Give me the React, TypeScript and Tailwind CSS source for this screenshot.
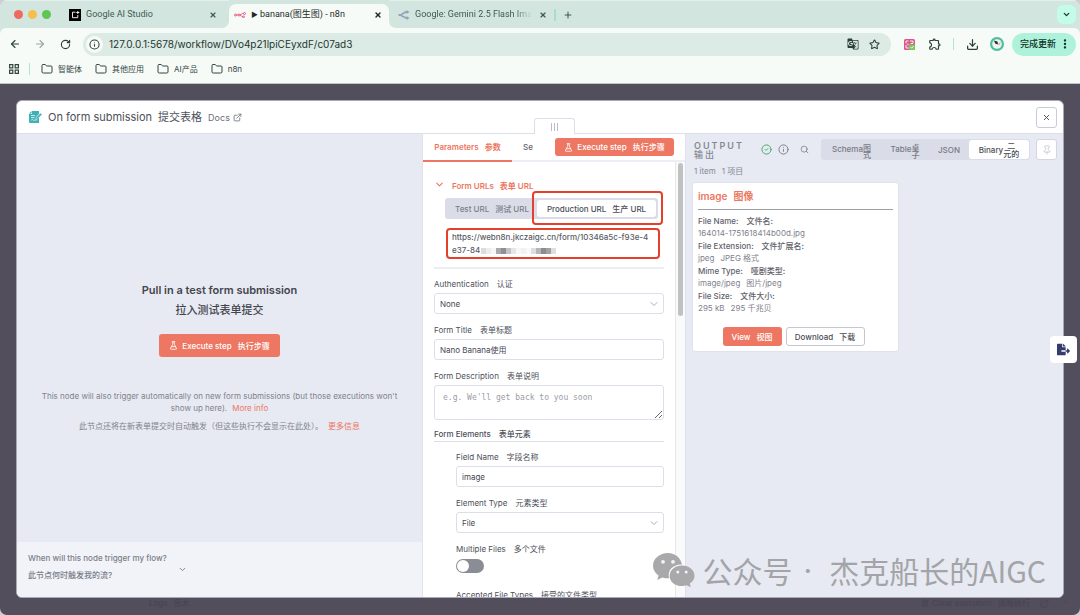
import type { ReactNode } from "react";
import {
  ArrowLeft,
  ArrowRight,
  ChevronDown,
  ChevronUp,
  CircleCheck,
  Download,
  ExternalLink,
  FlaskConical,
  Folder,
  Info,
  Pin,
  Plus,
  RotateCw,
  Search,
  Star,
  Trash2,
  X,
} from "lucide-react";
import { FaFileExport } from "react-icons/fa";
import { MdGTranslate, MdMoreVert, MdOutlineExtension } from "react-icons/md";

function Bi({ en, zh, gap = "ml-[6px]" }: { en: string; zh: string; gap?: string }) {
  return (
    <>
      {en}
      <span className={gap}>{zh}</span>
    </>
  );
}

function N8nMark() {
  return (
    <svg viewBox="0 0 24 12" className="h-[6px] w-3 shrink-0" fill="none" stroke="#ea4b71" strokeWidth="1.8">
      <circle cx="3" cy="6" r="2" />
      <circle cx="10" cy="6" r="2" />
      <circle cx="21" cy="3" r="2" />
      <circle cx="19" cy="9.6" r="1.8" />
      <path d="M5 6h3M12 6c3 0 2-3 5-3h2M12 6c3 0 2 3.600 5 3.600" />
    </svg>
  );
}

function FormMark() {
  return (
    <svg viewBox="0 0 26 24" className="h-3 w-[13px] shrink-0">
      <path d="M6 0h14v6l-5 5v3l3-.5 2-2V24H2a2 2 0 0 1-2-2V6h6z" fill="#3fb0b5" />
      <path d="M0 5 5 0v5z" fill="#3fb0b5" />
      <path d="M23 4l3 3-8.500 8.500-4 1 1-4z" fill="#3fb0b5" stroke="#fff" strokeWidth="0.8" />
      <path d="M4 9h8M4 13h7M4 19c2-3 3-3 4-1s2 1 3 0h5" stroke="#fff" strokeWidth="1.4" fill="none" />
    </svg>
  );
}

function RouterMark() {
  return (
    <svg viewBox="0 0 24 20" className="h-[10px] w-3 shrink-0" fill="none" stroke="#94a3b8" strokeWidth="3.600">
      <path d="M1 10h3c5 0 7-6 13-6h2M4 10c5 0 7 6 13 6h2" />
      <path d="M17 0l6 4-6 4zM17 12l6 4-6 4z" fill="#94a3b8" stroke="none" />
    </svg>
  );
}

function WechatMark() {
  return (
    <svg viewBox="0 0 42 34" className="h-[34px] w-[42px] shrink-0">
      <path
        d="M15 0C6.700 0 0 5.600 0 12.800c0 4 2.200 7.400 5.500 9.800L4.300 27l5-2.600c1.800.6 3.700.9 5.700.9h1.200c-2.300-7.500 3.600-13.900 12.800-13.700C27.800 5 22.200 0 15 0z"
        fill="#a9a9ab"
      />
      <path
        d="M29 12.600c-7 0-12.400 4.600-12.400 10.300S22 33 29 33c1.600 0 3.200-.3 4.600-.7l4.200 1.900-1-3.700c2.900-1.900 4.700-4.600 4.700-7.600 0-5.700-5.500-10.300-12.500-10.300z"
        fill="#a9a9ab"
      />
      <circle cx="10" cy="8.800" r="1.900" fill="#f4f4f6" />
      <circle cx="20" cy="8.800" r="1.900" fill="#f4f4f6" />
      <circle cx="24.800" cy="19" r="1.500" fill="#f4f4f6" />
      <circle cx="33.200" cy="19" r="1.500" fill="#f4f4f6" />
    </svg>
  );
}

function BrowserTabs() {
  return (
    <div className="flex h-7 items-stretch bg-[#f6fbf8] font-[Roboto,'Noto_Sans_CJK_SC',sans-serif] text-[9px] text-[#3f5a52]">
      <div className="flex w-[229px] items-stretch rounded-br-[7px] border-t border-[#e2efea] bg-[#d2e6df]">
        <div className="flex w-[60px] items-center gap-[5px] pl-[14px]">
          <span className="size-[9px] rounded-full bg-[#ed6a5e]" />
          <span className="size-[9px] rounded-full bg-[#f4bf4f]" />
          <span className="size-[9px] rounded-full bg-[#61c554]" />
        </div>
        <div className="flex flex-1 items-center pr-[12px] pl-[9px]">
          <svg viewBox="0 0 12 12" className="size-3">
            <rect width="12" height="12" fill="#000" />
            <path d="M6.500 3.200H3.500v5.500h5.300V6M8.800 2v3M7.300 3.500h3" stroke="#fff" strokeWidth="0.9" fill="none" />
          </svg>
          <span className="ml-[5px] flex-1">Google AI Studio</span>
          <button aria-label="Close Google AI Studio"><X size={8} strokeWidth={3.500} /></button>
        </div>
      </div>
      <div className="w-[160px] bg-[#d2e6df] pt-[4px]">
        <div className="flex h-6 items-center rounded-t-[7px] bg-[#f6fbf8] pr-[7px] pb-[3px] pl-[5px] text-[#1f2b27]">
          <N8nMark />
          <span className="ml-[5px] flex-1 whitespace-nowrap"><span className="mr-[2px] text-[7px]">▶</span>banana(图生图) - n8n</span>
          <button aria-label="Close n8n"><X size={8} strokeWidth={4} /></button>
        </div>
      </div>
      <div className="flex flex-1 items-stretch rounded-bl-[7px] border-t border-[#e2efea] bg-[#d2e6df]">
        <div className="flex w-[167px] items-center pr-[9px] pl-[9px]">
          <RouterMark />
          <span className="ml-[5px] whitespace-nowrap [mask-image:linear-gradient(to_right,black_85%,transparent)]">
            Google: Gemini 2.5 Flash Ima
          </span>
          <button aria-label="Close Gemini" className="ml-auto"><X size={8} strokeWidth={3.500} /></button>
        </div>
        <div className="flex flex-1 items-center">
          <span className="-ml-[2px] h-3 w-[2px] rounded bg-[#a4dfca]" />
          <button aria-label="New tab" className="ml-[7px]"><Plus size={10} strokeWidth={2.500} /></button>
        </div>
        <div className="flex items-center pr-[4px]">
          <button aria-label="Tab list" className="flex size-[19px] items-center justify-center rounded-[6px] bg-[#c3fce9] text-[#17352b]">
            <ChevronDown size={9} strokeWidth={3.500} />
          </button>
        </div>
      </div>
    </div>
  );
}

function AddressBar() {
  return (
    <div className="flex h-8 items-center rounded-t-[6px] bg-[#f6fbf8] pr-[4px] pl-[9px] text-[#2c3f38]">
      <button aria-label="Back"><ArrowLeft size={12} strokeWidth={2.200} /></button>
      <button aria-label="Forward" className="ml-[13px] text-[#98a8a1]"><ArrowRight size={12} strokeWidth={2.200} /></button>
      <button aria-label="Reload" className="ml-[14px]"><RotateCw size={11} strokeWidth={2.500} /></button>
      <div className="ml-[12px] flex h-[23px] flex-1 items-center rounded-full bg-[#dcebe5] pr-[11px] pl-[3px]">
        <span className="flex size-[17px] items-center justify-center rounded-full bg-[#f6fbf8]">
          <Info size={11} strokeWidth={2.300} />
        </span>
        <input
          aria-label="Address"
          className="ml-[6px] min-w-0 flex-1 bg-transparent text-[10px] text-[#24352f] outline-none"
          defaultValue="127.0.0.1:5678/workflow/DVo4p21lpiCEyxdF/c07ad3"
        />
        <MdGTranslate size={12} />
        <Star size={11} strokeWidth={2.300} className="ml-[10px]" />
      </div>
      <svg viewBox="0 0 11 11" className="ml-[13px] size-[11px]">
        <rect width="11" height="11" rx="1.500" fill="#dc5589" />
        <path d="M2 4.500V2h2.500M6 2h3v2.500H6.500M2 6v3h3M4 4.500v2" stroke="#fff" strokeWidth="0.9" fill="none" />
        <rect x="5" y="5.500" width="6" height="5.500" rx="1" fill="#77c95a" />
        <path d="M6.500 8l1.200 1.200L9.600 7" stroke="#fff" strokeWidth="0.9" fill="none" />
      </svg>
      <MdOutlineExtension size={14} className="ml-[13px]" />
      <span className="ml-[11px] h-3 w-px bg-[#a3ead1]" />
      <Download size={13} strokeWidth={2.300} className="ml-[12px]" />
      <svg viewBox="0 0 14 14" className="ml-[11px] size-[14px]">
        <circle cx="7" cy="7" r="7" fill="#4cbfa0" />
        <circle cx="7" cy="7" r="4.800" fill="#eef4f2" />
        <path d="M3.800 3.600l3.600.8 1 3.200-3-.8z" fill="#24352f" />
        <path d="M7.500 6.500l3.500-1.500-1.500 3.500z" fill="#e9b8a0" />
      </svg>
      <button className="ml-[8px] flex h-[23px] w-16 items-center justify-between rounded-full bg-[#aef2dc] pr-[4px] pl-2 text-[9px] font-medium whitespace-nowrap text-[#12352a]">
        完成更新
        <MdMoreVert size={14} />
      </button>
    </div>
  );
}

function Bookmarks() {
  return (
    <div className="flex h-6 items-center border-b border-[#c3c4c8] bg-[#f6fbf8] pb-[5px] pl-[9px] text-[8px] text-[#34443e]">
      <svg viewBox="0 0 10 10" className="size-[10px]" fill="none" stroke="currentColor" strokeWidth="1.200">
        <path d="M.6.6h3.200v3.200H.6zM6.200.6h3.200v3.200H6.200zM.6 6.200h3.200v3.200H.6zM6.200 6.200h3.200v3.200H6.200z" />
      </svg>
      <span className="ml-[10px] h-3 w-px bg-[#a3ead1]" />
      <nav className="ml-[11px] flex gap-[13px]">
        {["智能体", "其他应用", "AI产品", "n8n"].map((name) => (
          <a key={name} href="#" className="flex items-center gap-[5px]">
            <Folder size={12} strokeWidth={2} />
            {name}
          </a>
        ))}
      </nav>
    </div>
  );
}

function ExecuteButton({ className }: { className: string }) {
  return (
    <button className={`flex items-center justify-center gap-[4px] rounded-[3px] bg-[#ed7762] text-[8px] font-medium whitespace-nowrap text-white ${className}`}>
      <FlaskConical size={9} strokeWidth={2.200} />
      <span><Bi en="Execute step" zh="执行步骤" /></span>
    </button>
  );
}

function Field({ id, en, zh, children }: { id: string; en: string; zh: string; children: ReactNode }) {
  return (
    <div className="mt-[10px]">
      <label htmlFor={id} className="mb-[3px] block h-3 text-[8px] leading-3 text-[#4d5059]">
        <Bi en={en} zh={zh} gap="ml-[8px]" />
      </label>
      {children}
    </div>
  );
}

const boxClass = "block w-full rounded-[3px] border border-[#dcdfe9] bg-white text-[8px] text-[#454852] outline-none";

function SelectBox({ id, value }: { id: string; value: string }) {
  return (
    <div className="relative">
      <select id={id} defaultValue={value} className={`${boxClass} h-[21px] appearance-none px-[5px]`}>
        <option>{value}</option>
      </select>
      <ChevronDown size={12} strokeWidth={1.500} className="pointer-events-none absolute top-[5px] right-[4px] text-[#8d919c]" />
    </div>
  );
}

function InputPanel() {
  return (
    <section className="flex min-w-0 flex-col bg-[#e7eaf2]">
      <div className="flex flex-1 flex-col items-center px-4 pt-[148px] text-center">
        <h2 className="text-[11px] leading-4 font-semibold text-[#43454d]">Pull in a test form submission</h2>
        <h2 className="mt-[4px] text-[11px] leading-4 font-medium text-[#43454d]">拉入测试表单提交</h2>
        <ExecuteButton className="mt-[16px] h-[23px] w-[121px]" />
        <p className="mt-[33px] text-[8px] leading-3 text-[#7f828d]">
          This node will also trigger automatically on new form submissions (but those executions won't
          <br />
          show up here).<a href="#" className="ml-[5px] text-[#ed7762]">More info</a>
        </p>
        <p className="mt-[6px] text-[8px] leading-3 text-[#7f828d]">
          此节点还将在新表单提交时自动触发（但这些执行不会显示在此处）。
          <a href="#" className="ml-[5px] text-[#ed7762]">更多信息</a>
        </p>
      </div>
      <button className="flex h-[55px] items-center bg-[#f1f3f9] px-[11px] text-left text-[8px] leading-[17px] font-medium text-[#7a7d88]">
        <span className="w-[150px] pb-[6px] whitespace-nowrap">
          When will this node trigger my flow?
          <br />
          此节点何时触发我的流?
        </span>
        <ChevronDown size={9} strokeWidth={2.500} />
      </button>
    </section>
  );
}

const mosaic = [
  "bg-[#dcdcde]", "bg-[#ececed]", "bg-[#f6f6f6]", "bg-[#a9a9ad]", "bg-[#8f8f93]", "bg-[#c4c4c7]",
  "bg-[#e6e6e8]", "bg-[#f7f7f7]", "bg-[#f1f1f2]", "bg-[#f8f8f8]", "bg-[#dddddf]", "bg-[#b6b6b9]",
  "bg-[#8c8c90]", "bg-[#a2a2a6]", "bg-[#dededf]",
];

function ParametersPanel() {
  return (
    <section className="flex min-h-0 min-w-0 flex-col border-x border-[#dfe2ec] bg-white">
      <div className="flex h-7 shrink-0 items-stretch border-b-2 border-[#eceef6] text-[8px] font-medium">
        <button className="-mb-[2px] w-[89px] border-b-2 border-[#ed7762] font-semibold text-[#ed7762]"><Bi en="Parameters" zh="参数" /></button>
        <button className="ml-[11px] text-[#63666f]">Se</button>
        <div className="ml-auto pt-[4px] pr-[11px]">
          <ExecuteButton className="h-[18px] w-[119px]" />
        </div>
      </div>
      <div className="flex min-h-0 flex-1">
        <div className="min-h-0 min-w-0 flex-1 overflow-hidden pt-[18px] pr-[11px] pl-[11px]">
          <button className="flex h-3 items-center text-[8px] font-semibold text-[#ed7762]">
            <ChevronDown size={11} strokeWidth={2.500} className="mb-[4px]" />
            <span className="ml-[7px]"><Bi en="Form URLs" zh="表单 URL" /></span>
          </button>
          <div className="mt-[6px] mr-[6px] ml-[11px] flex h-[21px] items-stretch rounded-[3px] bg-[#dadde7] p-[2px] text-[8px] font-medium whitespace-nowrap">
            <button className="flex-1 text-[#7b7e89]"><Bi en="Test URL" zh="测试 URL" /></button>
            <div className="relative w-[119px]">
              <button className="h-full w-full rounded-[3px] bg-white text-[#4b4e57]"><Bi en="Production URL" zh="生产 URL" /></button>
              <span className="pointer-events-none absolute -top-[9px] -right-[7px] -bottom-[8px] -left-[5px] rounded-[4px] border-2 border-[#e5402b]" />
            </div>
          </div>
          <div className="mt-[9px] mr-[4px] ml-[12px] h-[31px] rounded-[4px] border-2 border-[#e5402b] px-[4px] pt-px text-[8px] leading-[13px] font-medium whitespace-nowrap text-[#5a5d66]">
            <div>https://webn8n.jkczaigc.cn/form/10346a5c-f93e-4</div>
            <div className="flex items-center">
              e37-84
              <span className="ml-px flex">
                {mosaic.map((shade, i) => (
                  <span key={i} className={`h-[6px] w-[5px] ${shade}`} />
                ))}
              </span>
            </div>
          </div>
          <hr className="mt-[8px] border-t-2 border-[#eceef6]" />
          <div className="-mt-px">
            <Field id="auth" en="Authentication" zh="认证">
              <SelectBox id="auth" value="None" />
            </Field>
          </div>
          <Field id="title" en="Form Title" zh="表单标题">
            <input id="title" defaultValue="Nano Banana使用" className={`${boxClass} h-[21px] px-[5px]`} />
          </Field>
          <Field id="description" en="Form Description" zh="表单说明">
            <textarea
              id="description"
              placeholder="e.g. We'll get back to you soon"
              className={`${boxClass} h-[35px] px-[8px] pt-[6px] font-['DejaVu_Sans_Mono',monospace] placeholder:text-[#9a9da6]`}
            />
          </Field>
          <h3 className="mt-[8px] h-[14px] border-b border-[#dcdfe9] text-[8px] leading-3 font-medium text-[#4d5059]">
            <Bi en="Form Elements" zh="表单元素" gap="ml-[8px]" />
          </h3>
          <div className="-mt-px pl-[22px]">
            <Field id="field" en="Field Name" zh="字段名称">
              <input id="field" defaultValue="image" className={`${boxClass} h-[21px] px-[5px]`} />
            </Field>
            <Field id="element" en="Element Type" zh="元素类型">
              <SelectBox id="element" value="File" />
            </Field>
            <Field id="multiple" en="Multiple Files" zh="多个文件">
              <span className="relative block h-[21px] w-7 pt-px">
                <input id="multiple" type="checkbox" role="switch" className="block h-[14px] w-7 appearance-none rounded-full bg-[#8b8d96]" />
                <span className="pointer-events-none absolute top-[2px] left-px size-3 rounded-full bg-white" />
              </span>
            </Field>
            <Field id="accepted" en="Accepted File Types" zh="接受的文件类型">
              <input id="accepted" className={`${boxClass} h-[21px] px-[5px]`} />
            </Field>
          </div>
        </div>
        <div className="w-[10px] shrink-0 border-l border-[#e8e8ea] bg-[#fafafa] px-[2px] pt-px">
          <div className="h-[153px] rounded-full bg-[#c1c1c3]" />
        </div>
      </div>
    </section>
  );
}

const fileFacts = [
  { en: "File Name:", zh: "文件名:", value: "164014-1751618414b00d.jpg", valueZh: "" },
  { en: "File Extension:", zh: "文件扩展名:", value: "jpeg", valueZh: "JPEG 格式" },
  { en: "Mime Type:", zh: "哑剧类型:", value: "image/jpeg", valueZh: "图片/jpeg" },
  { en: "File Size:", zh: "文件大小:", value: "295 kB", valueZh: "295 千兆贝" },
];

function OutputPanel() {
  return (
    <section className="min-w-0 bg-[#e7eaf2] pr-[6px] pl-[6px]">
      <div className="flex h-[31px] items-center">
        <h2 className="ml-[2px] w-[67px] text-[9px] leading-[9px] font-medium tracking-[2px] text-[#858893]">
          <span className="font-semibold">OUTPUT</span>
          <br />
          输出
        </h2>
        <CircleCheck size={11} strokeWidth={2} className="text-[#3fa563]" />
        <Info size={11} strokeWidth={2} className="ml-[6px] text-[#777a85]" />
        <button aria-label="Search" className="ml-[11px] text-[#777a85]"><Search size={9} strokeWidth={2} /></button>
        <div className="ml-auto flex h-[21px] w-[209px] items-stretch rounded-[3px] bg-[#dadde7] p-px text-[8px] font-medium text-[#777a85]">
          <button className="flex w-[59px] items-start justify-center pt-[4px] leading-[10px]">
            Schema<span className="w-2 pt-px leading-[7px]">图式</span>
          </button>
          <button className="flex w-[48px] items-start justify-center pt-[4px] leading-[10px]">
            Table<span className="w-2 pt-px leading-[7px]">桌子</span>
          </button>
          <button className="flex-1">JSON</button>
          <button className="flex w-[60px] items-center justify-center rounded-[3px] bg-white text-[#4b4e57]">
            Binary<span className="w-4 text-center leading-[8px]">二<br />元的</span>
          </button>
        </div>
        <button aria-label="Pin data" className="ml-[6px] flex size-[21px] items-center justify-center rounded-[3px] border border-[#d3d6e1] bg-white text-[#c3c7d4]">
          <Pin size={10} />
        </button>
      </div>
      <p className="mt-px ml-[2px] text-[8px] leading-[10px] text-[#858893]"><Bi en="1 item" zh="1 项目" /></p>
      <article className="mt-[6px] h-[170px] w-[207px] rounded-[3px] border border-[#dfe2ec] bg-white px-[5px] pt-[6px]">
        <h3 className="h-[21px] border-b border-[#9c9fa6] text-[10px] leading-[14px] font-semibold text-[#ed7762]"><Bi en="image" zh="图像" /></h3>
        <dl className="mt-[5px] text-[8px] leading-[12px]">
          {fileFacts.map((f) => (
            <div key={f.en} className="h-[25px]">
              <dt className="font-medium text-[#5f626c]"><Bi en={f.en} zh={f.zh} gap="ml-[8px]" /></dt>
              <dd className="text-[#7f828d]"><Bi en={f.value} zh={f.valueZh} /></dd>
            </div>
          ))}
        </dl>
        <div className="mt-[12px] flex justify-center gap-[4px] pr-[4px] text-[8px] font-medium">
          <button className="h-[19px] w-[59px] rounded-[3px] bg-[#ed7762] text-white"><Bi en="View" zh="视图" /></button>
          <button className="h-[19px] w-[79px] rounded-[3px] border border-[#c4c7d2] bg-white text-[#4b4e57]"><Bi en="Download" zh="下载" /></button>
        </div>
      </article>
    </section>
  );
}

export default function App() {
  return (
    <div className="h-screen bg-[#cfcfd3] font-[Inter,'Noto_Sans_CJK_SC',sans-serif]">
      <div className="flex h-full flex-col overflow-hidden rounded-[7px] bg-[#524e5c]">
        <header className="bg-[#d2e6df]">
          <BrowserTabs />
          <AddressBar />
          <Bookmarks />
        </header>
        <main className="relative flex min-h-0 flex-1 flex-col px-4 pt-4">
          <div className="flex min-h-0 flex-1 flex-col overflow-hidden rounded-[6px] border border-[#aaa8b5] bg-white">
            <div className="flex h-[33px] shrink-0 items-center border-b border-[#dbe0e8] pr-[6px] pl-[12px] text-[#4d5059]">
              <FormMark />
              <h1 className="ml-[6px] text-[11px]"><Bi en="On form submission" zh="提交表格" /></h1>
              <a href="#" className="ml-[6px] flex items-center gap-[3px] pt-[2px] text-[9px] text-[#6d707a]">
                Docs <ExternalLink size={9} strokeWidth={2.200} className="mb-px" />
              </a>
              <button aria-label="Close" className="ml-auto flex size-[21px] items-center justify-center rounded-[3px] border border-[#c9ccd8] bg-white">
                <X size={9} strokeWidth={2.500} />
              </button>
            </div>
            <div className="relative grid min-h-0 flex-1 grid-cols-[405fr_264fr_377fr] grid-rows-[minmax(0,1fr)]">
              <InputPanel />
              <ParametersPanel />
              <OutputPanel />
              <button
                aria-label="Resize panels"
                className="absolute -top-4 left-[517px] flex h-4 w-[41px] items-center justify-center gap-[2px] rounded-t-[3px] border border-b-0 border-[#dbe0e8] bg-white"
              >
                <span className="h-2 w-px bg-[#b9bdcb]" />
                <span className="h-2 w-px bg-[#b9bdcb]" />
                <span className="h-2 w-px bg-[#b9bdcb]" />
              </button>
            </div>
          </div>
          <div className="flex h-[17px] shrink-0 items-start text-[8px] leading-[10px] font-medium text-[#494553]">
            <span className="ml-[133px]"><Bi en="Logs" zh="原木" /></span>
            <span className="mr-[12px] ml-auto flex items-center gap-[3px]">
              <Trash2 size={8} />
              <Bi en="Clear execution" zh="清晰执行" gap="ml-[3px]" />
              <ExternalLink size={9} className="ml-[7px]" />
            </span>
            <ChevronUp size={9} className="-mr-[6px]" />
          </div>
          <button aria-label="Export" className="absolute top-[252px] right-[3px] flex size-[27px] items-center justify-center rounded-[4px] bg-white text-[#343c6e]">
            <FaFileExport size={13} />
          </button>
          <div className="pointer-events-none absolute right-[34px] bottom-[23px] flex items-center gap-[8px] text-[30px] leading-[44px] whitespace-nowrap text-[#a3a4a8]">
            <WechatMark />
            <span className="flex font-['Noto_Sans_CJK_SC',sans-serif]">
              公众号<span className="mr-[17px] ml-[11px] font-[Inter,sans-serif]">·</span>
              <span>杰克船长的AIGC</span>
            </span>
          </div>
        </main>
      </div>
    </div>
  );
}
